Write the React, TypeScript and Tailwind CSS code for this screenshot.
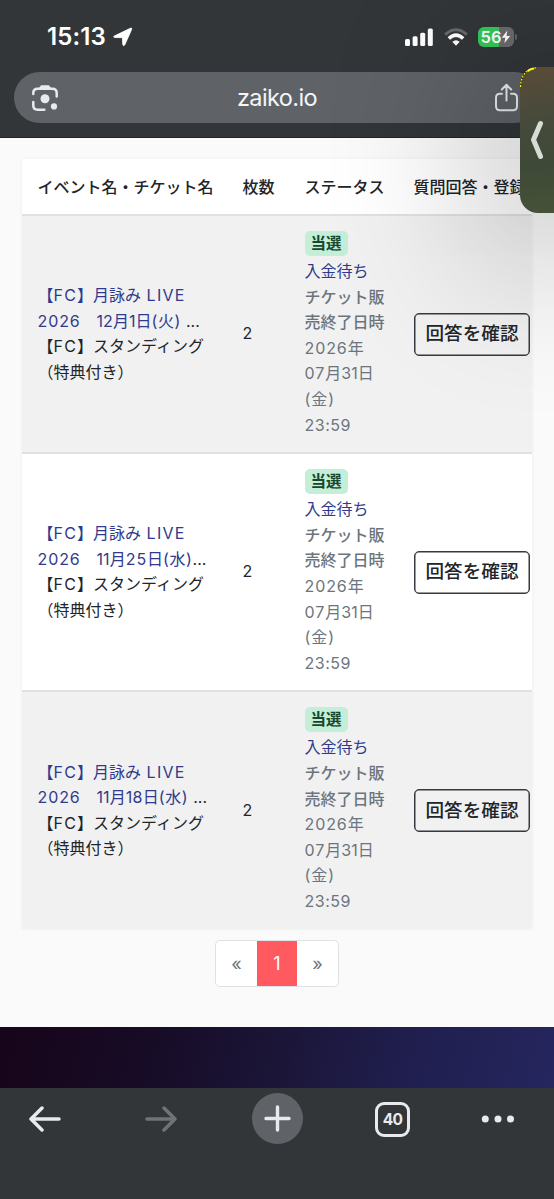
import type { ReactNode } from "react";

const events = [
  { date: "12", rest: "1", day: "火", gap: "ml-[5px]", track: "tracking-[0px]", alt: true },
  { date: "11", rest: "25", day: "水", gap: "", track: "tracking-[0.9px]", alt: false },
  { date: "11", rest: "18", day: "水", gap: "ml-[5px]", track: "tracking-[0.3px]", alt: true },
];

const Wide = ({ children }: { children: ReactNode }) => (
  <span className="tracking-[1.2px]">{children}</span>
);

function StatusBar() {
  return (
    <div className="flex h-[72px] items-center pl-[47px] pr-[37px] pt-[2px] text-white">
      <span className="w-[63px] whitespace-nowrap text-[24px] font-semibold leading-none tracking-[0.1px]">15:13</span>
      <svg className="ml-[2px]" width="22" height="22" viewBox="0 0 22 22">
        <path d="M2.2 10.1 18.3 2.3Q20.4 1.5 19.6 3.5L12.7 19Q11.3 20.8 10.7 18.3L10.5 11.7 3 11.5Q.6 11 2.2 10.1Z" fill="currentColor" stroke="currentColor" strokeWidth="0.8" />
      </svg>
      <svg className="ml-auto" width="30" height="20" viewBox="0 0 30 20" fill="currentColor">
        <rect x="1" y="12" width="5" height="7" rx="1.5" />
        <rect x="8.6" y="9.3" width="5" height="9.7" rx="1.5" />
        <rect x="16.2" y="5.7" width="5" height="13.3" rx="1.5" />
        <rect x="23.8" y="1.5" width="5" height="17.5" rx="1.5" />
      </svg>
      <svg className="ml-[9px]" width="26" height="20" viewBox="0 0 26 20" fill="none">
        <path d="M2.2 7.7Q13 -2.2 23.8 7.7" stroke="#67696b" strokeWidth="3" />
        <path d="M5.8 11.5Q13 4.7 20.2 11.5" stroke="white" strokeWidth="3.5" />
        <path d="M9.3 14.8Q13 11.5 16.7 14.8L13 18.7Z" fill="white" />
      </svg>
      <div className="ml-[9px] flex h-[20px] w-[36px] items-center justify-center rounded-[6px] bg-[linear-gradient(90deg,#34c759_57%,#6b6b6d_57%)] text-[16.5px] font-semibold">
        <span>56</span>
        <svg width="10" height="14" viewBox="0 0 10 14" fill="currentColor">
          <path d="M6.3.6.8 7.8h3.5L3.4 13.3 9.2 6H5.5Z" />
        </svg>
      </div>
      <div className="ml-[1px] h-[6px] w-[2px] rounded-r-full bg-[#626466]" />
    </div>
  );
}

function AddressBar() {
  return (
    <div className="mx-[14px] flex h-[51px] items-center rounded-full bg-[#5f6368] pl-[17px] pr-[21px] text-[#e8eaed]">
      <svg width="28" height="28" viewBox="0 0 28 28" fill="none" stroke="currentColor" strokeWidth="2.5" strokeLinecap="round">
        <path d="M2.3 10V9q0-4.3 4.3-4.3h14.8q4.3 0 4.3 4.3v3.5M2.3 18v3.5q0 4.2 4.3 4.2h6.7" />
        <path d="M8.5 4.5 10.5 2h7l2 2.5Z" fill="currentColor" strokeWidth="1.5" />
        <circle cx="14" cy="14.8" r="4.5" fill="currentColor" stroke="none" />
        <circle cx="23" cy="22.4" r="3.1" fill="currentColor" stroke="none" />
      </svg>
      <span className="flex-1 pl-[1px] text-center text-[23.5px] leading-none tracking-[-0.6px] text-[#f4f5f6]">zaiko.io</span>
      <svg width="25" height="29" viewBox="0 0 25 29" fill="none" stroke="currentColor" strokeWidth="2" strokeLinecap="round" strokeLinejoin="round">
        <path d="M8 10.7H6q-4 0-4 4v8.6q0 4 4 4h13q4 0 4-4v-8.6q0-4-4-4h-2M12.5 17.5V2M7.8 6.5 12.5 1.8 17.2 6.5" />
      </svg>
    </div>
  );
}

function TicketRow({ event }: { event: (typeof events)[number] }) {
  return (
    <div className={`grid h-[238.2px] grid-cols-[205px_62px_109px_134px] border-b-2 border-[#dee2e6] text-[16px] leading-[25.6px] last:h-[237px] last:border-b-0 ${event.alt ? "bg-[#f1f1f1]" : "bg-white"}`}>
      <div className="self-center whitespace-nowrap pl-[15.5px] text-[#212529]">
        <div className="text-[#303a8c]">【<Wide>FC</Wide>】月詠み <span className="ml-[1px] tracking-[1.3px]">LIVE</span></div>
        <div className="text-[#303a8c]">
          <span className="inline-block w-[43px] tracking-[0.9px]">2026</span>
          <span className="ml-[16px] tracking-[0.1px]">{event.date}</span>月<span className={event.track}>{event.rest}</span>日<span className="tracking-[0.6px]">({event.day})</span><span className={`text-[#212529] ${event.gap}`}>...</span>
        </div>
        <div>【<Wide>FC</Wide>】スタンディング</div>
        <div>（特典付き）</div>
      </div>
      <div className="self-center pl-[15.5px] text-[#212529]">2</div>
      <div className="whitespace-nowrap pl-[15.5px] pt-[15px] text-[#6c757d]">
        <div className="flex h-[28px] items-start">
          <span className="flex h-[25px] items-center rounded-[5px] bg-[#c3eed8] px-[6px] text-[15.5px] font-bold text-[#17482f]">当選</span>
        </div>
        <div className="text-[#303a8c]">入金待ち</div>
        <div className="font-medium">チケット販</div>
        <div className="font-medium">売終了日時</div>
        <div><span className="tracking-[0.9px]">2026</span>年</div>
        <div><span className="tracking-[1px]">07</span>月31日</div>
        <div className="tracking-[0.9px]">(金)</div>
        <div className="tracking-[0.5px]">23:59</div>
      </div>
      <div className="self-center pl-[16px]">
        <button className="flex h-[43px] w-[116px] items-center justify-center whitespace-nowrap rounded-[5px] border border-[#343a40] pb-px text-[18.6px] font-medium text-[#212529] shadow-[inset_0_0_0_0.5px_#343a40]">回答を確認</button>
      </div>
    </div>
  );
}

function BottomBar() {
  return (
    <footer className="grid h-[111px] grid-cols-[90px_142px_90px_141px_70px] items-start justify-items-center bg-[#323639] pt-[5px] text-[#e8eaed]">
      <svg className="mt-[11px]" width="32" height="30" viewBox="0 0 32 30" fill="none" stroke="currentColor" strokeWidth="3.5" strokeLinecap="round" strokeLinejoin="round">
        <path d="M30 15H2M13 4 2 15 13 26" />
      </svg>
      <svg className="mt-[11px]" width="32" height="30" viewBox="0 0 32 30" fill="none" stroke="#707276" strokeWidth="3.5" strokeLinecap="round" strokeLinejoin="round">
        <path d="M2 15h28M19 4 30 15 19 26" />
      </svg>
      <div className="flex h-[51px] w-[51px] items-center justify-center rounded-full bg-[#5f6368]">
        <svg width="27" height="27" viewBox="0 0 27 27" stroke="currentColor" strokeWidth="3.4" strokeLinecap="round">
          <path d="M13.5 2v23M2 13.5h23" />
        </svg>
      </div>
      <div className="mt-[9px] flex h-[35px] w-[35px] items-center justify-center rounded-[9px] border-[3px] border-[#e8eaed] text-[15.5px] font-bold tracking-[-0.6px]">40</div>
      <svg className="mt-[22px]" width="34" height="8" viewBox="0 0 34 8" fill="currentColor">
        <circle cx="4.3" cy="4" r="3.5" />
        <circle cx="17" cy="4" r="3.5" />
        <circle cx="29.5" cy="4" r="3.5" />
      </svg>
    </footer>
  );
}

export default function App() {
  return (
    <div className="relative flex h-[1199px] w-[554px] flex-col overflow-hidden bg-[#fafafa] font-['Inter','Noto_Sans_CJK_JP',sans-serif]">
      <header className="h-[138px] shrink-0 border-b border-[#222528] bg-[#323639]">
        <StatusBar />
        <AddressBar />
      </header>
      <main className="flex h-[889px] shrink-0 flex-col items-center px-[22px] pt-[21px]">
        <div className="w-[510px] shadow-[0_0_4px_rgba(0,0,0,0.05)]">
          <div className="grid h-[57px] grid-cols-[205px_62px_109px_134px] items-center overflow-hidden whitespace-nowrap border-b-2 border-[#dee2e6] bg-white text-[16px] font-medium text-[#212529] [&>span]:pl-[15.5px]">
            <span>イベント名・チケット名</span>
            <span>枚数</span>
            <span>ステータス</span>
            <span>質問回答・登録</span>
          </div>
          {events.map((event, i) => <TicketRow key={i} event={event} />)}
        </div>
        <nav className="mt-[10.6px] flex h-[47px] w-[124px] shrink-0 overflow-hidden rounded-[5px] border border-[#dee2e6] bg-white text-[18px] text-[#6c757d]">
          <span className="flex flex-1 items-center justify-center">«</span>
          <span className="-my-px flex w-[40px] items-center justify-center bg-[#ff5a5f] text-white">1</span>
          <span className="flex flex-1 items-center justify-center">»</span>
        </nav>
      </main>
      <div className="h-[61px] shrink-0 bg-[linear-gradient(105deg,#17051a_0%,#170b25_25%,#1b1537_50%,#201f50_75%,#25265e_100%)]" />
      <BottomBar />
      <aside className="absolute left-[520px] top-[67px] flex h-[145.5px] w-[60px] items-center rounded-[18px] bg-[linear-gradient(170deg,#5a4b38_0%,#454a3b_38%,#3f4938_65%,#465337_100%)] pl-[10px] shadow-[0_20px_160px_30px_rgba(0,0,0,0.3)]">
        <svg className="absolute left-0 top-0" width="22" height="24" viewBox="0 0 22 24" fill="none">
          <path d="M.6 20C.6 8 7 1.2 17 .8" stroke="#151507" strokeWidth="1.3" />
          <path d="M.6 20C.6 8 7 1.2 17 .8" stroke="#eeee18" strokeWidth="1.3" strokeDasharray="2 1.2" />
          <path d="M7.5 4.2Q10.5 1.8 14 1.6" stroke="#f5f516" strokeWidth="2" />
        </svg>
        <svg width="14" height="40" viewBox="0 0 14 40" fill="none" stroke="#d7ddd4" strokeWidth="5" strokeLinecap="round" strokeLinejoin="round">
          <path d="M10.5 3.5 3.5 19.8 10.5 36.5" />
        </svg>
      </aside>
    </div>
  );
}
